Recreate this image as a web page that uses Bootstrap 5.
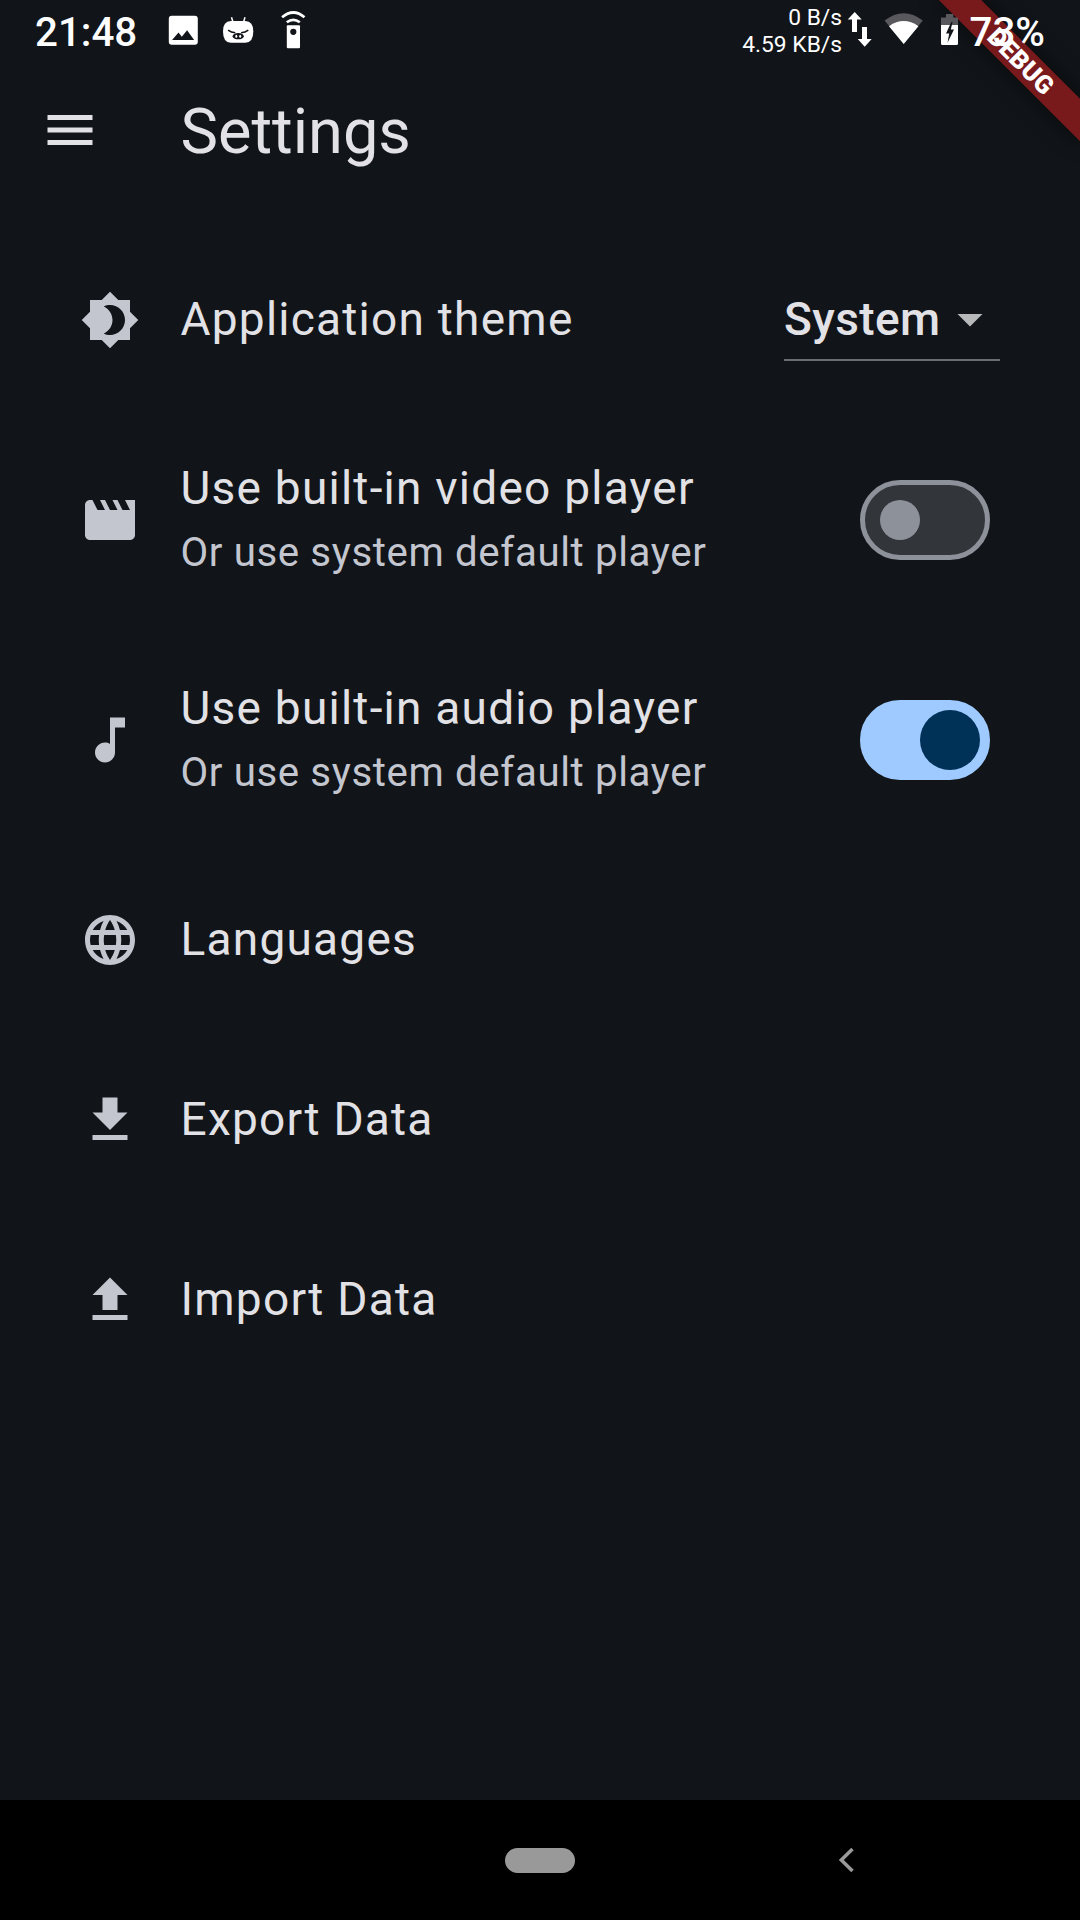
<!DOCTYPE html>
<html lang="en" data-bs-theme="dark">
<head>
<meta charset="utf-8">
<meta name="viewport" content="width=device-width, initial-scale=1">
<title>Settings</title>
<link href="https://cdn.jsdelivr.net/npm/bootstrap@5.3.0/dist/css/bootstrap.min.css" rel="stylesheet">
<style>
  body { width: 1080px; height: 1920px; background: #111418; color: #e2e2e6; font-family: Roboto, sans-serif; overflow: hidden; }
  svg { display: block; fill: currentColor; flex: none; }
  .status-strip { height: 60px; color: #fff; padding-left: 35px; padding-right: 35px; }
  .status-clock { font-size: 40.3px; font-weight: 500; line-height: 60px; padding-top: 3px; }
  .net-speed { font-size: 22.8px; line-height: 27px; height: 60px; padding-top: 3.5px; }
  .app-header { height: 140px; padding-left: 40px; }
  .app-title { font-size: 63.1px; font-weight: 400; line-height: 80px; margin-left: 80.5px; padding-top: 2px; color: #e2e2e6; }
  .settings-list { padding-top: 30px; }
  .setting { height: 180px; padding: 0 80px; background: transparent; color: inherit; border: 0; }
  .setting.two-line { height: 220px; padding-right: 90px; }
  .setting-icon { color: #c3c6cf; width: 60px; height: 60px; margin-right: 40.5px; }
  .setting-title { font-size: 46px; line-height: 69px; letter-spacing: 1.24px; margin-top: -2px; }
  .setting-note { font-size: 40.25px; line-height: 57.5px; letter-spacing: .61px; color: #c3c6cf; margin-top: 1px; }
  .two-line .setting-text { margin-top: -5px; }
  .two-line .setting-title { margin-top: 0; }
  .theme-select { width: 216px; height: 81px; border-bottom: 2px solid #6b6d6f; font-size: 46px; font-weight: 500; letter-spacing: .4px; }
  .theme-select svg { color: #b8b9ba; width: 60px; height: 60px; }
  .toggle { width: 130px; height: 80px; background: #323539; border: 5px solid #8d9199; padding-left: 15px; }
  .toggle-thumb { width: 40px; height: 40px; background: #8d9199; }
  .toggle.is-on { background: #9fcaff; border-color: #9fcaff; padding: 0 5px; justify-content: flex-end; }
  .is-on .toggle-thumb { width: 60px; height: 60px; background: #003258; }
  .system-nav { height: 120px; background: #000; color: #999; }
  .home-pill { width: 70px; height: 25px; background: #999; }
  .debug-corner { width: 220px; height: 220px; overflow: hidden; z-index: 0; }
  .debug-band { left: 60px; top: 45px; width: 200px; height: 30px; transform: rotate(45deg); background: #78191b; box-shadow: 0 0 20px rgba(0,0,0,.5); color: #fff; font-size: 25.5px; font-weight: 900; line-height: 30px; padding-left: 3px; }
</style>
<script src="https://cdn.jsdelivr.net/npm/bootstrap@5.3.0/dist/js/bootstrap.bundle.min.js"></script>
</head>
<body class="d-flex flex-column m-0 position-relative">
  <div class="debug-corner position-absolute top-0 end-0">
    <div class="debug-band position-absolute text-center">DEBUG</div>
  </div>

  <div class="status-strip d-flex position-relative">
    <div class="status-clock">21:48</div>
    <svg class="ms-4" width="160" height="60" viewBox="161.200 0 160 60">
      <path fill-rule="evenodd" d="M172 15.700h23q3 0 3 3v23q0 3-3 3h-23q-3 0-3-3v-23q0-3 3-3zM172.300 40h22l-7-9.700-5.300 6.500-3.300-4.300z"/>
      <path d="M231 21h14.500q8 0 8 10.500q0 11.200-8 11.200H231q-7.800 0-7.800-11.200q0-10.500 7.800-10.500z"/>
      <path d="M231.700 17.200l1.500 5M245.200 17.200l-1.500 5" stroke="#fff" stroke-width="1.500"/>
      <path d="M228.300 30.200q3 2.300 7.200 2.600M248.500 30.200q-3 2.300-7.200 2.600" fill="none" stroke="#111418" stroke-width="1.500"/>
      <ellipse cx="238.400" cy="36.200" rx="5.600" ry="3.100" fill="#111418"/>
      <ellipse cx="236.500" cy="36.200" rx="1" ry="1.500"/>
      <ellipse cx="240.400" cy="36.200" rx="1" ry="1.500"/>
      <rect x="287" y="25.300" width="13.200" height="23" rx="1"/>
      <circle cx="293.500" cy="31.800" r="3.100" fill="#111418"/>
      <path d="M282.300 17.300q11.200-9.600 22.400 0M287 22.300q6.500-5 13 0" fill="none" stroke="#fff" stroke-width="2.700"/>
    </svg>
    <div class="net-speed ms-auto text-end">0 B/s<br>4.59 KB/s</div>
    <svg width="127.500" height="60" viewBox="842 0 127.500 60">
      <path d="M854.700 12l7 7.500h-4.700V32h-5V19.500h-4.300zM862 27h5v12h4.700l-7 7.700-7-7.700h4.300z"/>
      <path fill="#59595d" d="M884.600 20.600Q903.700 6 922.800 20.600L903.700 44z"/>
      <path d="M889 26.200Q903.700 16 918.400 26.200L903.700 44z"/>
      <path fill="#59595d" d="M946 14h7.300v3.500H958V26h-17v-8.500h5z"/>
      <path d="M941 25h17v18.500q0 1.500-1.500 1.500h-14q-1.500 0-1.500-1.500z"/>
      <path fill="#111418" d="M951.300 22l-5.300 11.500h3.200l-1.700 9.300 6.500-13.200h-3.200l1.800-7.600z"/>
    </svg>
    <div class="status-clock">73%</div>
  </div>

  <header class="app-header d-flex align-items-center">
    <svg width="60" height="60" viewBox="0 0 24 24"><path d="M3 18h18v-2H3v2zm0-5h18v-2H3v2zm0-7v2h18V6H3z"/></svg>
    <h1 class="app-title mb-0">Settings</h1>
  </header>

  <main class="settings-list list-group list-group-flush flex-grow-1">
    <div class="setting list-group-item d-flex align-items-center">
      <svg class="setting-icon" viewBox="0 0 24 24"><path d="M20 8.690V4h-4.690L12 .690 8.690 4H4v4.690L.690 12 4 15.310V20h4.690L12 23.310 15.310 20H20v-4.690L23.310 12 20 8.690zM12 18c-.890 0-1.740-.200-2.500-.550C11.560 16.500 13 14.420 13 12s-1.440-4.500-3.500-5.450C10.260 6.200 11.110 6 12 6c3.310 0 6 2.690 6 6s-2.690 6-6 6z"/></svg>
      <div class="setting-title">Application theme</div>
      <div class="theme-select ms-auto d-flex align-items-center justify-content-between">System
        <svg viewBox="0 0 24 24"><path d="M7 10l5 5 5-5z"/></svg>
      </div>
    </div>
    <div class="setting two-line list-group-item d-flex align-items-center">
      <svg class="setting-icon" viewBox="0 0 24 24"><path d="M18 4l2 4h-3l-2-4h-2l2 4h-3l-2-4H8l2 4H7L5 4H4c-1.100 0-1.990.900-1.990 2L2 18c0 1.100.900 2 2 2h16c1.100 0 2-.900 2-2V4h-4z"/></svg>
      <div class="setting-text">
        <div class="setting-title">Use built-in video player</div>
        <div class="setting-note">Or use system default player</div>
      </div>
      <div class="toggle rounded-pill d-flex align-items-center ms-auto" role="switch" aria-checked="false"><div class="toggle-thumb rounded-circle"></div></div>
    </div>
    <div class="setting two-line list-group-item d-flex align-items-center">
      <svg class="setting-icon" viewBox="0 0 24 24"><path d="M12 3v10.550c-.590-.340-1.270-.550-2-.550-2.210 0-4 1.790-4 4s1.790 4 4 4 4-1.790 4-4V7h4V3h-6z"/></svg>
      <div class="setting-text">
        <div class="setting-title">Use built-in audio player</div>
        <div class="setting-note">Or use system default player</div>
      </div>
      <div class="toggle is-on rounded-pill d-flex align-items-center ms-auto" role="switch" aria-checked="true"><div class="toggle-thumb rounded-circle"></div></div>
    </div>
    <div class="setting list-group-item d-flex align-items-center">
      <svg class="setting-icon" viewBox="0 0 24 24"><path d="M11.990 2C6.470 2 2 6.480 2 12s4.470 10 9.990 10C17.520 22 22 17.520 22 12S17.520 2 11.990 2zm6.930 6h-2.950c-.320-1.250-.780-2.450-1.380-3.560 1.840.630 3.370 1.910 4.330 3.560zM12 4.040c.830 1.200 1.480 2.530 1.910 3.960h-3.820c.430-1.430 1.080-2.760 1.910-3.960zM4.260 14C4.100 13.360 4 12.690 4 12s.100-1.360.260-2h3.380c-.080.660-.140 1.320-.140 2s.060 1.340.140 2H4.260zm.820 2h2.950c.320 1.250.780 2.450 1.380 3.560-1.840-.630-3.370-1.900-4.330-3.560zm2.950-8H5.080c.960-1.660 2.490-2.930 4.330-3.560C8.810 5.550 8.350 6.750 8.030 8zM12 19.960c-.830-1.200-1.480-2.530-1.910-3.960h3.820c-.430 1.430-1.080 2.760-1.910 3.960zM14.340 14H9.660c-.090-.660-.160-1.320-.160-2s.070-1.350.160-2h4.680c.090.650.160 1.320.160 2s-.070 1.340-.160 2zm.250 5.560c.600-1.110 1.060-2.310 1.380-3.560h2.950c-.960 1.650-2.490 2.930-4.330 3.560zM16.360 14c.080-.660.140-1.320.140-2s-.060-1.340-.140-2h3.380c.160.640.260 1.310.260 2s-.100 1.360-.260 2h-3.380z"/></svg>
      <div class="setting-title">Languages</div>
    </div>
    <div class="setting list-group-item d-flex align-items-center">
      <svg class="setting-icon" viewBox="0 0 24 24"><path d="M19 9h-4V3H9v6H5l7 7 7-7zM5 18v2h14v-2H5z"/></svg>
      <div class="setting-title">Export Data</div>
    </div>
    <div class="setting list-group-item d-flex align-items-center">
      <svg class="setting-icon" viewBox="0 0 24 24"><path d="M9 16h6v-6h4l-7-7-7 7h4zm-4 2h14v2H5z"/></svg>
      <div class="setting-title">Import Data</div>
    </div>
  </main>

  <footer class="system-nav row g-0 align-items-center">
    <div class="col-4"></div>
    <div class="col-4 d-flex justify-content-center"><div class="home-pill rounded-pill"></div></div>
    <div class="col-4"><svg class="ms-5" width="160" height="60" viewBox="768 1830 160 60"><path d="M852.500 1849L841.300 1860l11.200 11" fill="none" stroke="#999" stroke-width="3.500"/></svg></div>
  </footer>
</body>
</html>
